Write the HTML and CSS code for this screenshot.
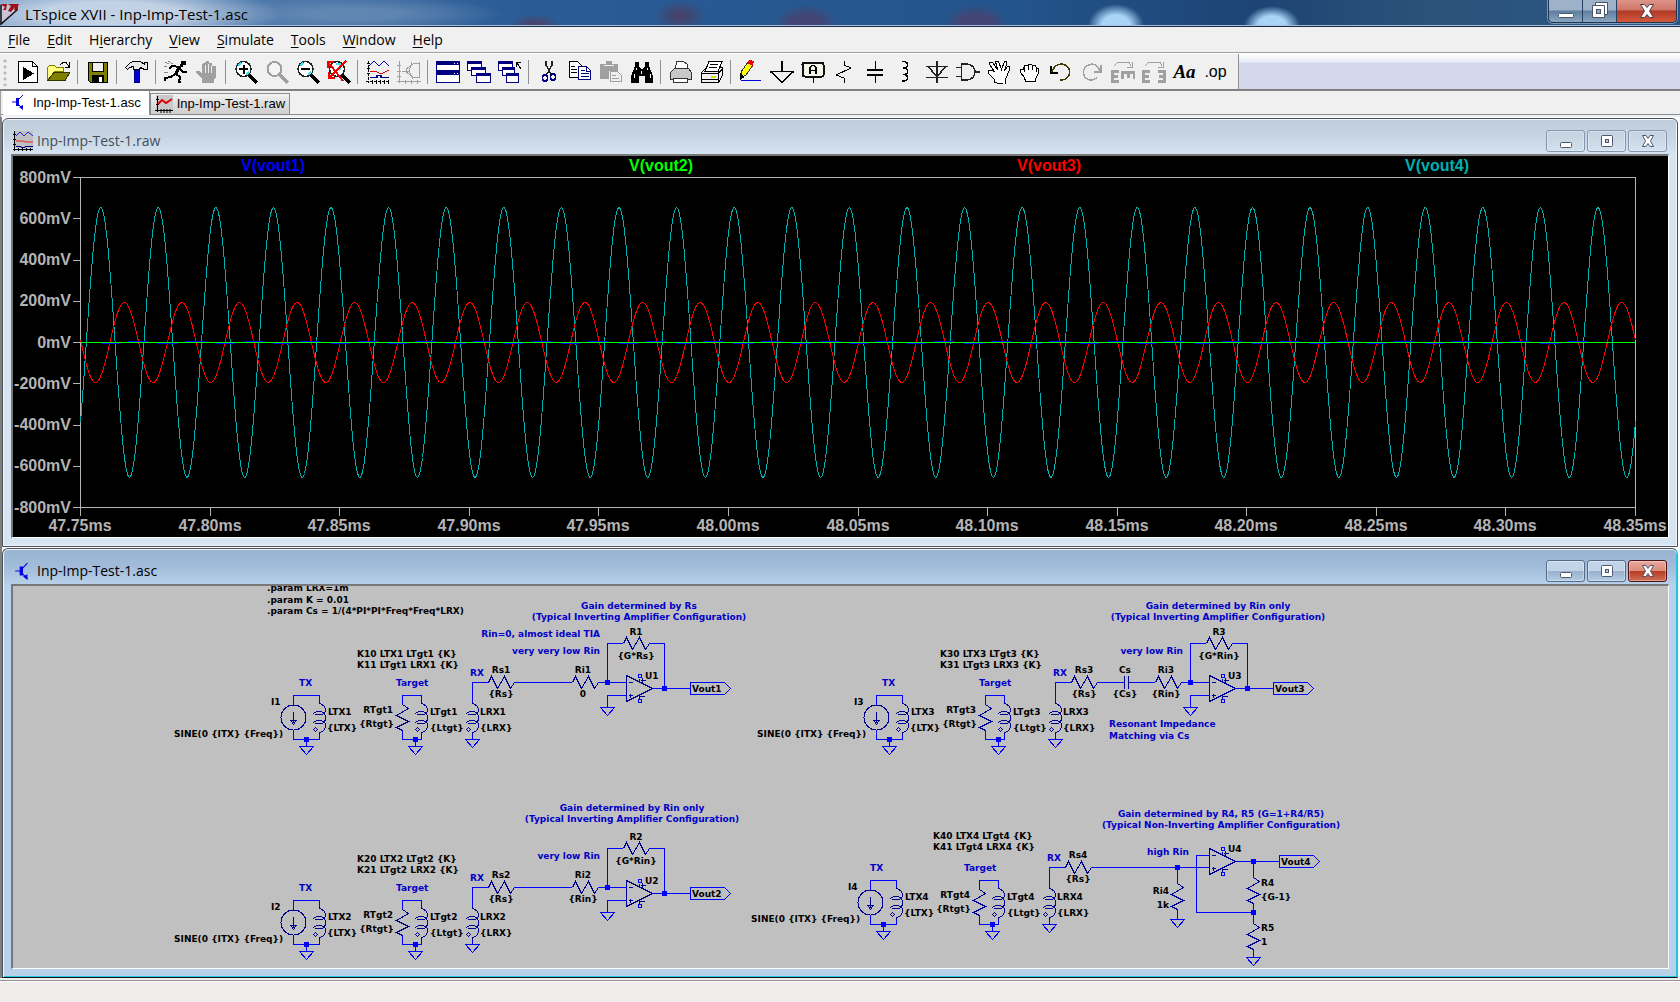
FILE: index.html
```html
<!DOCTYPE html>
<html lang="en">
<head>
<meta charset="utf-8">
<title>LTspice XVII - Inp-Imp-Test-1.asc</title>
<link rel="stylesheet" href="styles.css">
</head>
<body>
<header class="titlebar">
  <svg class="app-icon" viewBox="0 0 20 26" width="20" height="26"><path d="M1 5v19l16-14V7" fill="#c9c3d8" stroke="#111" stroke-width="1.5"/><path d="M0 4h7l-1 6h-3l2-3zM8 4h11l-3 7-2-1 1-3-4 5-3-1 3-5z" fill="#a01018"/></svg>
  <h1 class="app-title">LTspice XVII - Inp-Imp-Test-1.asc</h1>
  <div class="caption">
    <button class="cap-btn" aria-label="Minimize"><svg width="20" height="22" viewBox="0 0 20 22"><rect x="2.500" y="13.500" width="15" height="4" rx="1" fill="#fff" stroke="#4a5568"/></svg></button>
    <button class="cap-btn" aria-label="Restore"><svg width="20" height="22" viewBox="0 0 20 22"><path d="M5.500 2.500h12v12h-3v3h-12v-12h3z" fill="#fff" stroke="#4a5568"/><path d="M5.500 5.500h9v9" fill="none" stroke="#4a5568"/><rect x="6.500" y="9.500" width="4" height="4" fill="#8fa5bd" stroke="#4a5568"/></svg></button>
    <button class="cap-btn cap-close" aria-label="Close"><svg width="20" height="22" viewBox="0 0 20 22"><path d="M3.500 4.500h4l2.500 3 2.500-3h4l-4 6.500 4 6.500h-4l-2.500-3-2.500 3h-4l4-6.500z" fill="#fff" stroke="#4d3a44"/></svg></button>
  </div>
</header>

<nav class="menubar">
  <button><u>F</u>ile</button><button><u>E</u>dit</button><button>H<u>i</u>erarchy</button><button><u>V</u>iew</button><button><u>S</u>imulate</button><button><u>T</u>ools</button><button><u>W</u>indow</button><button><u>H</u>elp</button>
</nav>

<div class="toolbar-row">
<div class="toolbar">
  <span class="grip"></span>
  <button aria-label="New schematic"><svg viewBox="0 0 24 24"><path d="M2.500 1.500h14l5 5v16h-19z" fill="#fff" stroke="#000"/><path d="M16.500 1.500v5h5" fill="none" stroke="#000"/><path d="M7 7v13l11-6.500z"/></svg></button>
  <button aria-label="Open"><svg viewBox="0 0 24 24"><path d="M.5 20.500v-13l2-2h5l2 2h7v4h-9z" fill="#ffff80" stroke="#808000"/><path d="M1 20.500l6-8.500h16l-5 8.500z" fill="#808000" stroke="#333300"/><path d="M13 5l3-2.500h3l3 4M22.500 2v5h-5" fill="none" stroke="#000"/></svg></button>
  <i></i>
  <button aria-label="Save"><svg viewBox="0 0 24 24"><path d="M2.500 2.500h19v20h-17l-2-2z" fill="#808000" stroke="#000"/><path d="M6.500 2.500h11v9h-11z" fill="#f0f0f0" stroke="#000"/><path d="M6 15h12v8h-12z"/><path d="M13 17h3v5h-3z" fill="#fff"/></svg></button>
  <i></i>
  <button aria-label="Control panel"><svg viewBox="0 0 24 24"><path d="M.5 7.500l4-4 3-2h8l4 3v-2h3v7h-3l-4-2-1 2h-6v-3l-4 1-2 2z" fill="#e8e8e8" stroke="#000"/><path d="M9.500 10.500h5v12h-5z" fill="#0000e0" stroke="#000080"/></svg></button>
  <i></i>
  <button aria-label="Run"><svg viewBox="0 0 24 24"><path d="M17 1h5v4h-3v2h-3z"/><path d="M17 6l-5 8M16 7l-8-1-3 3M15 8l4 4h4" stroke="#000" stroke-width="2" fill="none"/><path d="M13 8h3l-3 7h-3z"/><path d="M12 14l4 3-1 5h2M11 14l-4 3-6 1v3" stroke="#000" stroke-width="2" fill="none"/><path d="M1 2l4 2M0 6l3 1M4 1l5 3M0 12l4 1" stroke="#888"/></svg></button>
  <button aria-label="Halt" disabled><svg viewBox="0 0 24 24"><path d="M7 23v-4l-6-6v-2h3l3 3V5l1-2h2V2l2-1h2v2h3v3h3l1 1v10l-2 3v3z" fill="#a0a0a0"/><path d="M10.500 5v8M13.500 4v9M16.500 6v7" stroke="#eee" fill="none"/></svg></button>
  <i></i>
  <button aria-label="Zoom in"><svg viewBox="0 0 24 24"><path d="M15 15l8 8" stroke="#000" stroke-width="3.500"/><circle cx="9.500" cy="9" r="7.500" fill="#fff" stroke="#222" stroke-width="1.500"/><path d="M4 6l3-3M12 15l3-3" stroke="#40e0f0" stroke-width="2"/><path d="M5 9h9M9.500 4.500v9" stroke="#000" stroke-width="2"/></svg></button>
  <button aria-label="Pan" disabled><svg viewBox="0 0 24 24"><path d="M15 15l8 8" stroke="#a0a0a0" stroke-width="3.500"/><circle cx="9.500" cy="9" r="7" fill="#f4f4f4" stroke="#a0a0a0" stroke-width="2"/></svg></button>
  <button aria-label="Zoom out"><svg viewBox="0 0 24 24"><path d="M15 15l8 8" stroke="#000" stroke-width="3.500"/><circle cx="9.500" cy="9" r="7.500" fill="#fff" stroke="#222" stroke-width="1.500"/><path d="M4 6l3-3M12 15l3-3" stroke="#40e0f0" stroke-width="2"/><path d="M5 9h9" stroke="#000" stroke-width="2"/></svg></button>
  <button aria-label="Zoom full extents"><svg viewBox="0 0 24 24"><path d="M15 15l8 8" stroke="#000" stroke-width="3.500"/><circle cx="10" cy="9" r="7.500" fill="#fff" stroke="#222" stroke-width="1.500"/><path d="M9 4h4v6" stroke="#40e0f0" fill="none" stroke-width="2"/><path d="M1 2l15 19M19 1L2 18M1 8V2h6M2 12v6h6" stroke="#f00000" stroke-width="2" fill="none"/></svg></button>
  <i></i>
  <button aria-label="Autorange"><svg viewBox="0 0 24 24"><path d="M2.500 1v22M0 21.500h24" stroke="#000" stroke-dasharray="3 1"/><path d="M1 3h3M1 8h3M1 13h3M6 20v4M10 20v4M14 20v4M18 20v4M22 20v4" stroke="#000"/><path d="M3 6l5-5 5 5 5-5 5 5" stroke="#0000c0" fill="none"/><path d="M4 11h5l4 2h4l6-3" stroke="#e00000" fill="none"/><path d="M4 17.500h7v-2h4v2h8" stroke="#000080" fill="none" stroke-width="1.500"/></svg></button>
  <button aria-label="FFT" disabled><svg viewBox="0 0 24 24" fill="none" stroke="#a0a0a0"><path d="M2.500 1v22M0 21.500h24M0 5h4M0 11h4M0 16h4M8 20v4M14 20v4M20 20v4"/><path d="M22.500 2v16M22 3l-6 1-7 5v3l7 5 6 1M15 2l-3 9 4 8M5 11h7"/></svg></button>
  <i></i>
  <button aria-label="Tile windows"><svg viewBox="0 0 24 24"><path d="M.5 1.500h23v21h-23z" fill="#fff" stroke="#000080"/><path d="M0 1h24v4H0zM0 11h24v4H0z" fill="#000080"/><path d="M0 10.500h24" stroke="#000080"/><path d="M18 3h1M21 3h1M18 13h1M21 13h1" stroke="#fff"/></svg></button>
  <button aria-label="Cascade windows"><svg viewBox="0 0 24 24"><g fill="#fff" stroke="#000080"><path d="M.5 1.500h14v9H.5z"/><path d="M4.500 7.500h14v8h-14z"/><path d="M9.500 13.500h14v9h-14z"/></g><path d="M0 1h15v3H0zM4 7h15v3H4zM9 13h15v3H9z" fill="#000080"/></svg></button>
  <button aria-label="Close windows"><svg viewBox="0 0 24 24"><g fill="#fff" stroke="#000080"><path d="M.5 1.500h14v9H.5z"/><path d="M4.500 7.500h12v8h-12z"/><path d="M8.500 13.500h12v9h-12z"/></g><path d="M0 1h15v3H0zM4 7h13v3H4zM8 13h13v3H8z" fill="#000080"/><path d="M23 9l-4-6M18.500 7V2.500H23" stroke="#000" fill="none"/></svg></button>
  <i></i>
  <button aria-label="Cut"><svg viewBox="0 0 24 24"><path d="M9 1v4l5 9M15 1v4l-5 9" stroke="#222" stroke-width="1.500" fill="none"/><ellipse cx="8" cy="18" rx="2.500" ry="3.500" fill="none" stroke="#000080" stroke-width="1.500"/><ellipse cx="16" cy="17" rx="2.500" ry="3.500" fill="none" stroke="#000080" stroke-width="1.500"/></svg></button>
  <button aria-label="Copy"><svg viewBox="0 0 24 24"><path d="M1.500 1.500h8l4 4v12h-12z" fill="#fff" stroke="#000"/><path d="M3 6h4M3 9h6M3 12h6" stroke="#000"/><path d="M10.500 6.500h8l4 4v9h-12z" fill="#fff" stroke="#000080"/><path d="M12.500 10.500h4M12.500 13.500h8M12.500 16.500h8M18 7v4h4" stroke="#000080" fill="none"/></svg></button>
  <button aria-label="Paste" disabled><svg viewBox="0 0 24 24"><path d="M1 4h6V1h6v3h6v7h-9v8H1z" fill="#a0a0a0"/><path d="M5 5.500h10" stroke="#eee"/><path d="M11.500 11.500h7l4 4v6h-11z" fill="#eee" stroke="#a0a0a0"/><path d="M13 15.500h4M13 18.500h7" stroke="#a0a0a0"/></svg></button>
  <button aria-label="Find"><svg viewBox="0 0 24 24"><path d="M5 2h4v4l2 3h2l2-3V2h4v4l4 10v7h-8v-7h-6v7H1v-7L5 6z"/><path d="M6 8v2M4 14v4M17 8v2M20 14v4M11.500 11v3" stroke="#fff"/></svg></button>
  <i></i>
  <button aria-label="Print preview"><svg viewBox="0 0 24 24"><path d="M6.500 9l1-7.500h7l4 3L18 9" fill="#fff" stroke="#333"/><path d="M1.500 12.500l4-4h14l3 4v7h-21z" fill="#c8c8c8" stroke="#333"/><path d="M4.500 18.500h14v4h-14z" fill="#fff" stroke="#333"/></svg></button>
  <button aria-label="Print"><svg viewBox="0 0 24 24"><path d="M1.500 12.500l5-5h16v8l-4 7h-17z" fill="#f0f0f0" stroke="#000"/><path d="M5 11.500l4-10h13l-4 10z" fill="#fff" stroke="#000"/><path d="M10 4.500h8M9 7.500h8M1 13.500h17l5-5M18.500 14v8M2 19h16" stroke="#000" fill="none"/><path d="M11 16.500h5" stroke="#d8d800" stroke-width="2"/></svg></button>
  <i></i>
  <button aria-label="Draw wire"><svg viewBox="0 0 24 24"><path d="M2 18v-6l7-10 5 3-7 10z" fill="#ffff00" stroke="#333"/><path d="M8 3l2-3 5 1-1 5z" fill="#f00000"/><path d="M1 13l5 4-5 3z"/><path d="M2 20.500h20" stroke="#0000e0" stroke-width="1.500"/></svg></button>
  <button aria-label="Place ground"><svg viewBox="0 0 24 24"><path d="M12 1v10M.5 11.500h23L12 22.500z" fill="none" stroke="#000" stroke-width="1.500"/></svg></button>
  <button aria-label="Label net"><svg viewBox="0 0 24 24"><rect x="1.500" y="2.500" width="21" height="14" rx="2" fill="#f4f4e8" stroke="#111" stroke-width="2"/><path d="M12.500 17v6" stroke="#000"/><path d="M9 14V7.500l2-2h2l2 2V14M9 10.500h6" fill="none" stroke="#000" stroke-width="1.500"/></svg></button>
  <button aria-label="Place resistor"><svg viewBox="0 0 24 24"><path d="M12 1v4l7 3L4 15l8 3v5" fill="none" stroke="#000"/></svg></button>
  <button aria-label="Place capacitor"><svg viewBox="0 0 24 24"><path d="M12 1v8M12 15v8" stroke="#000"/><path d="M4 9.500h16M4 14.500h16" stroke="#000" stroke-width="2"/></svg></button>
  <button aria-label="Place inductor"><svg viewBox="0 0 24 24"><path d="M8 1.500h2c5 1 5 6 0 6.500h-1h1c5 1 5 6 0 6.500h-1h1c5 1 5 6 0 6.500h-2" fill="none" stroke="#000" stroke-width="1.500"/></svg></button>
  <button aria-label="Place diode"><svg viewBox="0 0 24 24"><path d="M12 1v22M1 17.500h22M1 6.500h22M3 6.500h18l-9 10z" fill="none" stroke="#222" stroke-width="1.500"/></svg></button>
  <button aria-label="Place component"><svg viewBox="0 0 24 24"><path d="M0 7.500h5M0 16.500h5M19 12h5M5.500 4v16h6c10-2 10-14 0-16z" fill="none" stroke="#222" stroke-width="1.500"/></svg></button>
  <button aria-label="Move"><svg viewBox="0 0 24 24"><path d="M7.500 22.500v-3l-6-6v-3h3l3 1-5-7v-2h3l5 7-2-8h3l3 8 3-8h2v3l-2 6 3-4h2v3l-2 5-2 5v5z" fill="#fff" stroke="#000"/></svg></button>
  <button aria-label="Drag"><svg viewBox="0 0 24 24"><path d="M7.500 21.500l-1-4-4-5v-3h3l1-4h3l1-1h3l1 1h3l1 3h2v5l-3 5v3z" fill="#fff" stroke="#000"/><path d="M6.500 6v6M10.500 5v5M14.500 5v5M18.500 8v4" stroke="#000"/></svg></button>
  <button aria-label="Undo"><svg viewBox="0 0 24 24"><path d="M2 6v7h7" fill="none" stroke="#000" stroke-width="2"/><path d="M3 12c2-6 6-8 10-8 12 2 9 17-2 16" fill="none" stroke="#403c00" stroke-width="1.500"/></svg></button>
  <button aria-label="Redo" disabled><svg viewBox="0 0 24 24" fill="none" stroke="#a0a0a0" stroke-width="1.500"><path d="M21 5v7h-7M20 11C17 3 12 4 10 4.500 0 7 2 21 12 20l5-2"/></svg></button>
  <button aria-label="Rotate" disabled><svg viewBox="0 0 24 24" fill="none" stroke="#a0a0a0"><path d="M3 6l4-4h11l2 4M21 2v5h-5"/><path d="M8 11.500H1.500v10H8M2 16.500h5M11.500 19v-6.500h12V19M17.500 13v5" stroke-width="3"/></svg></button>
  <button aria-label="Mirror" disabled><svg viewBox="0 0 24 24" fill="none" stroke="#a0a0a0"><path d="M3 6l4-4h11l2 4M21 2v5h-5"/><path d="M8 11.500H1.500v10H8M2 16.500h5M16 11.500h6.500v10H16M22 16.500h-5" stroke-width="3"/></svg></button>
  <button class="t-aa" aria-label="Text">Aa</button>
  <button class="t-op" aria-label="SPICE directive">.op</button>
</div>
<div class="toolbar-rest"></div>
</div>

<div class="tabs">
  <button class="tab tab-on"><svg width="18" height="18" viewBox="0 0 18 18"><use href="#bjt"/></svg>Inp-Imp-Test-1.asc</button>
  <button class="tab"><svg width="18" height="18" viewBox="0 0 18 18"><path d="M1 0h17v16H1z" fill="#c8c8c8"/><path d="M2.500 1v16M0 15.500h18" stroke="#000"/><path d="M1 4.500h3M1 9.500h3M6 14v4M9 14v4M12 14v4M15 14v4" stroke="#000"/><path d="M3 9l4-4 4 3 6-4" fill="none" stroke="#e00000" stroke-width="2"/></svg>Inp-Imp-Test-1.raw</button>
</div>

<main class="workspace">
  <section class="win">
    <div class="win-title">
      <svg width="20" height="20" viewBox="0 0 20 20"><path d="M2 0h18v17H2z" fill="#c0c0c0"/><path d="M1.500 0v20M0 18.500h20M0 3.500h3M0 8.500h3M0 13.500h3M5.500 17v3M9.500 17v3M13.500 17v3M17.500 17v3" stroke="#000"/><path d="M3 5l4-4 4 4 4-4 5 4" stroke="#2020e0" fill="none"/><path d="M3 10h6l4 1h7" stroke="#e02020" fill="none"/><path d="M3 15.500h5v1h4v-1h8" stroke="#000080" fill="none"/></svg>
      <h2>Inp-Imp-Test-1.raw</h2>
      <div class="win-btns">
        <button class="wb" aria-label="Minimize"><svg width="20" height="20"><use href="#g-min"/></svg></button>
        <button class="wb" aria-label="Maximize"><svg width="20" height="20"><use href="#g-max"/></svg></button>
        <button class="wb" aria-label="Close"><svg width="20" height="20"><use href="#g-x"/></svg></button>
      </div>
    </div>
    <div class="client"><svg id="plot" class="plot" viewBox="13 156 1655 381"></svg></div>
  </section>
  <section class="win win-active">
    <div class="win-title">
      <svg width="20" height="20" viewBox="-1 -1 18 18"><use href="#bjt"/></svg>
      <h2>Inp-Imp-Test-1.asc</h2>
      <div class="win-btns">
        <button class="wb" aria-label="Minimize"><svg width="20" height="20"><use href="#g-min"/></svg></button>
        <button class="wb" aria-label="Maximize"><svg width="20" height="20"><use href="#g-max"/></svg></button>
        <button class="wb wb-close" aria-label="Close"><svg width="20" height="20"><use href="#g-x"/></svg></button>
      </div>
    </div>
    <div class="client"><svg id="sheet" class="sheet" viewBox="13 586 1655 382"></svg></div>
  </section>
</main>
<footer class="statusbar"></footer>

<svg class="defs" width="0" height="0" aria-hidden="true">
  <defs>
    <g id="bjt"><path d="M6.500 4v8" stroke="#0000e0" stroke-width="3"/><path d="M1 8h5M7 6l5-5M7 10l5 5" stroke="#0000e0"/><path d="M8 13l4-2v5z" fill="#0000e0"/></g>
    <g id="g-min"><rect x="4.500" y="11.500" width="11" height="5" rx="1" fill="#fff" stroke="#4f5870"/></g>
    <g id="g-max"><rect x="4.500" y="4.500" width="11" height="11" rx="1" fill="#fff" stroke="#4f5870"/><rect x="8.500" y="8.500" width="3" height="3" fill="#b8c8dc" stroke="#4f5870"/></g>
    <g id="g-x"><path d="M4.500 4.500h3.500l2 3 2-3h3.500l-3 5.500 3 5.500h-3.500l-2-3-2 3h-3.500l3-5.500z" fill="#fff" stroke="#4f5870"/></g>
    <path id="res-h" d="M0 0l3-6 6 12 7-12 6 12 4-6"/>
    <path id="res-v" d="M0 0l6 4-12 7 12 6-12 6 6 3"/>
    <path id="gnd" d="M-7 0h14l-7 8z"/>
    <g id="ind"><path d="M0 0v2c4 1 6 4 6 6 0 3-2 5-5 5-4 0-7 0-7-1s3-2 5-2c5 0 7 2 7 6 0 4-2 6-5 6-4 0-7 0-7-1s3-2 5-2c5 0 7 2 7 5 0 4-2 6-6 7v2"/><path d="M-4-2l2 2-2 2-2-2z" transform="translate(0 28)"/></g>
    <g id="opamp"><path d="M0-13v26l26-13z"/><path d="M2-6h4M2 7h4M4 5v4M13-10v4M16-11v5M14-8h5M13 6v4M13 8h5"/><path class="wire" d="M12-14h3v3h-3zM12 11h3v3h-3z"/></g>
    <path id="flag" d="M0-6h34l6 6-6 6H0z"/>
    <rect id="node" x="-3" y="-3" width="5" height="5"/>
  </defs>
</svg>
<script src="app.js"></script>
</body>
</html>
```
FILE: styles.css
```css
* { box-sizing: border-box; }
body {
  margin: 0;
  min-height: 100vh;
  display: flex;
  flex-direction: column;
  background: #f0f0f0;
  color: #000;
  font: 14px/20px "Open Sans", "Noto Sans", sans-serif;
}
button { font: inherit; color: inherit; background: none; border: 0; padding: 0; margin: 0; }
h1, h2 { font-size: 14px; font-weight: 400; margin: 0; white-space: nowrap; }
svg { display: block; flex: none; }
.defs { position: absolute; }

.titlebar {
  display: flex;
  height: 27px;
  border-bottom: 1px solid #1a2c48;
  box-shadow: inset 0 -1px #a8bfdc;
  background:
    radial-gradient(ellipse 170px 30px at 110px 14px, rgba(205, 218, 234, .9) 40%, rgba(170, 192, 218, 0) 100%),
    radial-gradient(ellipse 150px 18px at 355px 14px, rgba(110, 145, 185, .7) 30%, rgba(120, 155, 195, 0) 100%),
    radial-gradient(ellipse 26px 12px at 535px 26px, rgba(110, 40, 60, .6), rgba(110, 40, 60, 0)),
    radial-gradient(ellipse 26px 16px at 680px 16px, rgba(90, 50, 80, .7), rgba(90, 50, 80, 0)),
    radial-gradient(ellipse 32px 22px at 806px 26px, rgba(75, 65, 110, .8) 50%, rgba(85, 60, 100, 0)),
    radial-gradient(ellipse 32px 22px at 976px 26px, rgba(75, 65, 110, .8) 50%, rgba(85, 60, 100, 0)),
    radial-gradient(ellipse 28px 22px at 1116px 26px, #a8d4f8 50%, rgba(168, 212, 248, 0)),
    radial-gradient(ellipse 28px 20px at 1272px 26px, #a8d4f8 50%, rgba(168, 212, 248, 0)),
    linear-gradient(90deg, #6d93be 0, #2b5c96 30%, #23548b 60%, #1d4474 75%, #2b5378 85%, #2a5488 100%);
}
.app-icon { margin-right: 5px; }
.app-title { flex: 1; font-size: 15px; line-height: 28px; }
.caption {
  display: flex;
  height: 23px;
  margin-right: 3px;
  border: 1px solid #22344c;
  border-top: 0;
  border-radius: 0 0 5px 5px;
  overflow: hidden;
  box-shadow: 0 0 0 1px rgba(200, 220, 240, .5);
}
.cap-btn {
  width: 34px;
  display: grid;
  place-items: center;
  border-right: 1px solid #2a4060;
  background: linear-gradient(#9db2c8 0 45%, #5f7f9f 50%, #8aa4c0);
}
.cap-close { width: 59px; border: 0; background: linear-gradient(#dd9488 0, #cf7668 45%, #b03a26 50%, #d4583c); }

.menubar {
  display: flex;
  gap: 17px;
  height: 26px;
  padding: 0 8px;
  border-bottom: 1px solid #a0a0a0;
}
.menubar u { text-underline-offset: 2px; }

.toolbar-row { display: flex; height: 38px; border-top: 1px solid #fff; border-bottom: 2px solid #808080; }
.toolbar { display: flex; align-items: center; width: 1239px; flex: none; border-right: 1px solid #909090; padding-left: 3px; }
.grip { width: 9px; height: 28px; background: radial-gradient(circle, #b8b8b8 1px, transparent 2px) 0 0 / 4px 6px repeat-y; }
.toolbar button { width: 31px; height: 32px; display: grid; place-items: center; flex: none; }
.toolbar svg { width: 24px; height: 24px; shape-rendering: crispEdges; }
.toolbar i { width: 1px; height: 24px; margin: 0 4px 0 3px; background: #909090; flex: none; }
.toolbar .t-aa { font: italic bold 19px/24px "Liberation Serif", serif; }
.toolbar .t-op { font: 16px/20px "Liberation Sans", sans-serif; }
.toolbar-rest { flex: 1; background: linear-gradient(#fff, #e8ecf6 8px, #d3d8ec 9px); }

.tabs {
  display: flex;
  align-items: flex-start;
  height: 26px;
  padding-left: 2px;
  border-left: 1px solid #a0a0a0;
  background: linear-gradient(#898c95, #898c95) 0 23px / 100% 1px no-repeat, #f0f0f0;
}
.tab {
  display: flex;
  align-items: center;
  gap: 4px;
  height: 22px;
  margin-top: 2px;
  padding: 0 4px;
  border: 1px solid #898c95;
  background: linear-gradient(#f2f2f2, #ddd 50%, #cfcfcf);
  font: 13px/18px "Liberation Sans", Arial, sans-serif;
}
.tab-on { height: 24px; margin-top: 0; padding: 0 8px; border-width: 0 1px 0 0; background: #fff; }

.workspace { border-left: 2px solid #808080; padding-right: 2px; background: #fff; }
.win {
  margin: 1px 0 0;
  padding: 0 8px 8px;
  border: 1px solid #4b5158;
  border-radius: 6px 6px 0 0;
  background: linear-gradient(#bfcddb 0, #c9d7e5 20px, #d7e4f2 36px);
  box-shadow: inset 0 0 0 1px #eef5fc;
}
.win-active {
  background: linear-gradient(#99b4d1 0, #a2bcda 18px, #b9d1ea 36px);
  border-right-color: #20c0dc;
  border-bottom-color: #111;
  box-shadow: inset 0 1px #eef5fc, inset 1px 0 #eef5fc, inset -1px -1px #20c8e0;
}
.win-title { display: flex; align-items: center; height: 35px; padding-top: 8px; color: #444f5a; }
.win-active .win-title { color: #000; }
.win-title > svg { margin-left: 2px; margin-right: 4px; }
.win-title h2 { flex: 1; }
.win-btns { display: flex; gap: 2px; margin-right: 2px; }
.wb {
  width: 39px;
  height: 22px;
  display: grid;
  place-items: center;
  border: 1px solid #8296b0;
  border-radius: 3px;
  box-shadow: inset 0 0 0 1px rgba(255, 255, 255, .35);
}
.win-active .wb { border-color: #566b88; background: linear-gradient(#c2d4e8 0 48%, #98b0ca 50%, #b4cce4); }
.win-active .wb-close { border-color: #4c1018; background: linear-gradient(#e8a89c 0, #dc8c7c 48%, #b83c24 50%, #d06c54); }
.client { border: 2px solid #787878; border-right: 1px solid #fff; border-bottom: 1px solid #fff; }
.plot, .sheet { width: 100%; height: auto; overflow: hidden; }
.plot { background: #000; }
.sheet { background: #c0c0c0; }

.plot path { fill: none; stroke-width: 1; shape-rendering: crispEdges; }
.plot text { font: bold 16px "Liberation Sans", Arial, sans-serif; fill: #b4b4b4; }
.plot .axis { stroke: #b4b4b4; }
.plot .v1 { stroke: #0000ff; fill: none; }
.plot .v2 { stroke: #00ff00; fill: none; }
.plot .v3 { stroke: #ff0000; fill: none; }
.plot .v4 { stroke: #00b0b0; fill: none; }
.plot text.v1 { fill: #0000ff; stroke: none; }
.plot text.v2 { fill: #00ff00; stroke: none; }
.plot text.v3 { fill: #ff0000; stroke: none; }
.plot text.v4 { fill: #00b0b0; stroke: none; }

.sheet text { font: bold 9px "DejaVu Sans", Verdana, sans-serif; fill: #000; }
.sheet text.note { fill: #0000c8; }
.sheet .part, .sheet .wire { fill: none; shape-rendering: crispEdges; }
.part { stroke: #000090; }
.wire { stroke: #0000ff; }
.sheet .node { fill: #0000ff; }
.end { text-anchor: end; }
.mid { text-anchor: middle; }

.statusbar { flex: 1; min-height: 20px; margin-top: 2px; border-top: 1px solid #909090; background: #f0eceb; box-shadow: inset 0 1px #fff; }
```
FILE: app.js
```js
// Waveform viewer: 47.75 ms to 48.35 ms, +/-800 mV
const X0 = 80.5, X1 = 1635.5, Y0 = 177.5, Y1 = 507.5, MID = 342.5;

function wave(amp, peak, period) {
  const pts = [];
  for (let x = X0; x <= X1; x += 1) {
    pts.push(x + ' ' + (MID - amp * Math.cos(2 * Math.PI * (x - peak) / period)).toFixed(1));
  }
  return 'M' + pts.join('L');
}

function drawPlot() {
  const period = 57.59;
  let out = '';
  let axis = `M${X0 - 8} ${Y0}H${X1}V${Y1 + 8}M${X0} ${Y0}V${Y1 + 8}M${X0 - 8} ${Y1}H${X1}`;
  for (let i = 0; i <= 8; i++) {
    const y = Y0 + i * (Y1 - Y0) / 8;
    axis += `M${X0 - 8} ${y}H${X0}`;
    out += `<text class="end" x="71" y="${Math.round(y + 5)}">${800 - 200 * i}mV</text>`;
  }
  for (let i = 0; i <= 12; i++) {
    const x = X0 + i * (X1 - X0) / 12;
    axis += `M${x} ${Y1}v8`;
    out += `<text class="mid" x="${Math.floor(x)}" y="531">${(47.75 + 0.05 * i).toFixed(2)}ms</text>`;
  }
  [273, 661, 1049, 1437].forEach((x, i) => {
    out += `<text class="mid v${i + 1}" x="${x}" y="171">V(vout${i + 1})</text>`;
  });
  let ripple = '';
  for (let x = 127.5; x < X1 - 20; x += period) {
    ripple += `M${x} ${MID - 1}h20M${x - 27} ${MID + 1}h19`;
  }
  out += `<path class="axis" d="${axis}"/>`;
  out += `<path class="v4" d="${wave(135, 100.7, period)}"/>`;
  out += `<path class="v3" d="${wave(40, 124.3, period)}"/>`;
  out += `<path class="v2" d="M${X0} ${MID}H${X1}"/><path class="v1" d="${ripple}"/>`;
  document.getElementById('plot').innerHTML = out;
}

// Schematic
const t = (x, y, s, c = '') => `<text class="${c}" x="${x}" y="${y}">${s}</text>`;
const part = (id, x, y) => `<use class="part" href="#${id}" x="${x}" y="${y}"/>`;
const sym = (id, x, y) => `<use class="wire" href="#${id}" x="${x}" y="${y}"/>`;
const node = (x, y) => `<use class="node" href="#node" x="${x}" y="${y}"/>`;
const wire = d => `<path class="wire" d="${d}"/>`;
const at = (x, y, body) => `<g transform="translate(${x} ${y})">${body}</g>`;

// Transmitter coil, target and receiver coil
function coils(n, txX = 299, targetX = 396) {
  return wire('M293.500 705v-9.500h26v6M293.500 730v9.500h26v-7M306.500 739v7')
    + '<circle class="part" cx="293.500" cy="717.500" r="12.500"/><path class="part" d="M293.500 712v11M291 720.500h5l-2.500 4z"/>'
    + part('ind', 319.5, 701.5) + node(307, 740) + sym('gnd', 306.5, 746.5)
    + wire('M402.500 704v-8.500h19v6M402.500 730v9.500h19v-7M415.500 739v7')
    + part('res-v', 402.5, 704.5) + part('ind', 421.5, 701.5) + node(416, 740) + sym('gnd', 415.5, 746.5)
    + wire('M488.500 682.500h-16v19M472.500 733v6') + part('ind', 472.5, 701.5) + sym('gnd', 472.5, 739.5)
    + part('res-h', 488.5, 682.5)
    + t(txX, 686, 'TX', 'note') + t(targetX, 686, 'Target', 'note') + t(470, 676, 'RX', 'note')
    + t(271, 705, 'I' + n) + t(283, 737, 'SINE(0 {ITX} {Freq})', 'end')
    + t(328, 715, 'LTX' + n) + t(327, 731, '{LTX}')
    + t(393, 713, 'RTgt' + n, 'end') + t(394, 727, '{Rtgt}', 'end')
    + t(430, 715, 'LTgt' + n) + t(430, 731, '{Ltgt}')
    + t(480, 715, 'LRX' + n) + t(480, 731, '{LRX}')
    + t(501, 673, 'Rs' + n, 'mid') + t(501, 697, '{Rs}', 'mid');
}

// Inverting amplifier stage
function inverting(n, ri, rf) {
  return part('res-h', 572.5, 682.5) + part('res-h', 623.5, 643.5) + part('opamp', 626.5, 688.5)
    + wire('M598 682.500h29M607.500 682V643.500H623M649 643.500h15.500v45M652 688.500h38M627 695.500h-19.500v12')
    + sym('gnd', 607.5, 707.5) + sym('flag', 690.5, 688.5) + node(608, 683) + node(665, 689)
    + t(583, 673, 'Ri' + n, 'mid') + t(583, 697, ri, 'mid')
    + t(636, 635, 'R' + n, 'mid') + t(636, 659, rf, 'mid')
    + t(645, 679, 'U' + n) + t(692, 692, 'Vout' + n);
}

function coupling(x, y, n) {
  return t(x, y, `K${n}0 LTX${n} LTgt${n} {K}`) + t(x, y + 11, `K${n}1 LTgt${n} LRX${n} {K}`);
}

function title(x, y, a, b) {
  return t(x, y, a, 'note mid') + t(x, y + 11, b, 'note mid');
}

function drawSheet() {
  const inv = '(Typical Inverting Amplifier Configuration)';
  let s = t(267, 591, '.param LRX=1m') + t(267, 603, '.param K = 0.01')
    + t(267, 614, '.param Cs = 1/(4*PI*PI*Freq*Freq*LRX)');

  s += coils(1) + inverting(1, '0', '{G*Rs}') + wire('M514 682.500h58') + coupling(357, 657, 1)
    + title(639, 609, 'Gain determined by Rs', inv)
    + t(600, 637, 'Rin=0, almost ideal TIA', 'note end') + t(600, 654, 'very very low Rin', 'note end');

  s += at(0, 205, coils(2) + inverting(2, '{Rin}', '{G*Rin}') + wire('M514 682.500h58') + coupling(357, 657, 2)
    + t(600, 654, 'very low Rin', 'note end')) + title(632, 811, 'Gain determined by Rin only', inv);

  s += at(583, 0, coils(3) + inverting(3, '{Rin}', '{G*Rin}') + wire('M514 682.500h27M545 682.500h27')
    + '<path class="part" d="M541.500 676v13M545.500 676v13"/>' + coupling(357, 657, 3)
    + t(542, 673, 'Cs', 'mid') + t(542, 697, '{Cs}', 'mid') + t(600, 654, 'very low Rin', 'note end'))
    + title(1218, 609, 'Gain determined by Rin only', inv)
    + t(1109, 727, 'Resonant Impedance', 'note') + t(1109, 739, 'Matching via Cs', 'note');

  s += at(577, 185, coils(4, 293, 387)) + coupling(933, 839, 4)
    + title(1221, 817, 'Gain determined by R4, R5 (G=1+R4/R5)', '(Typical Non-Inverting Amplifier Configuration)')
    + t(1189, 855, 'high Rin', 'note end')
    + wire('M1091 867.500h119M1210 855.500h-13.500v57h57M1235 861.500h44M1253.500 861v16M1253.500 903v20M1253.500 949v9M1177.500 867v16M1177.500 909v10')
    + part('opamp', 1209.5, 861.5) + part('res-v', 1253.5, 877.5) + part('res-v', 1253.5, 923.5)
    + part('res-v', 1177.5, 883.5) + sym('gnd', 1253.5, 957.5) + sym('gnd', 1177.5, 919.5)
    + sym('flag', 1279.5, 861.5) + node(1178, 868) + node(1254, 862) + node(1254, 913)
    + t(1228, 852, 'U4') + t(1281, 865, 'Vout4')
    + t(1169, 894, 'Ri4', 'end') + t(1169, 908, '1k', 'end')
    + t(1261, 886, 'R4') + t(1261, 900, '{G-1}') + t(1261, 931, 'R5') + t(1261, 945, '1');

  document.getElementById('sheet').innerHTML = s;
}

drawPlot();
drawSheet();
```
